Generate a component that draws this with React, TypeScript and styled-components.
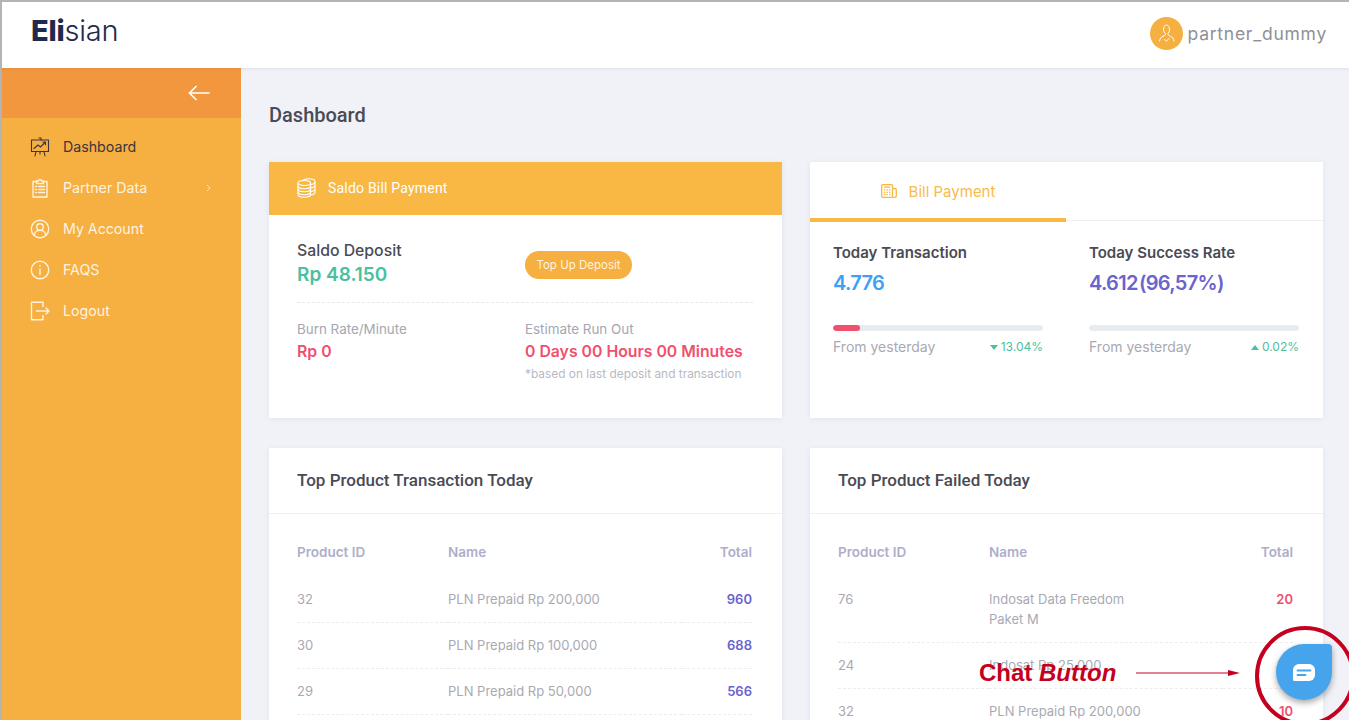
import React from 'react';
import styled, { createGlobalStyle } from 'styled-components';

const Global = createGlobalStyle`
  html, body { margin: 0; padding: 0; height: 100%; overflow: hidden; background: #f0f2f8; }
  * { box-sizing: border-box; }
`;

const Page = styled.div`
  position: relative;
  width: 1349px;
  height: 720px;
  overflow: hidden;
  border-top: 2px solid #b4b4b4;
  border-left: 2px solid #b4b4b4;
  font-family: 'Inter', 'Open Sans', sans-serif;
  background: #f0f2f8;
`;

const Header = styled.header`
  height: 66px;
  background: #fff;
  display: flex;
  align-items: center;
  justify-content: space-between;
  padding: 0 22px 4px 29px;
  box-shadow: 0 1px 3px rgba(60, 60, 90, 0.1);
  position: relative;
`;

const Logo = styled.div`
  font-size: 29px;
  line-height: 1;
  margin-top: -5px;
  color: #1f2a4d;
  font-weight: 300;
  letter-spacing: -0.2px;
  b { font-weight: 800; }
`;

const User = styled.div`
  display: flex;
  align-items: center;
  gap: 5px;
  font-size: 17.5px;
  letter-spacing: 0.75px;
  color: #8f8f97;
`;

const Avatar = styled.div`
  width: 33px;
  height: 33px;
  border-radius: 50%;
  background: #f6af41;
  display: flex;
  align-items: center;
  justify-content: center;
`;

const Body = styled.div`
  display: flex;
  height: 652px;
`;

const Sidebar = styled.aside`
  width: 239px;
  flex: none;
  background: #f6af41;
`;

const SideTop = styled.div`
  height: 50px;
  background: #f2973d;
  display: flex;
  align-items: center;
  justify-content: flex-end;
  padding-right: 31px;
`;

const Menu = styled.nav`
  padding-top: 8px;
`;

const MenuItem = styled.div<{ $active?: boolean }>`
  height: 41px;
  display: flex;
  align-items: center;
  gap: 13px;
  padding: 0 30px 0 28px;
  font-size: 14.2px;
  color: ${p => (p.$active ? '#3a3540' : '#fdf3e0')};
  span { flex: 1; }
`;

const Main = styled.main`
  flex: 1;
  padding: 0 26px 0 28px;
`;

const Title = styled.h1`
  margin: 0;
  height: 94px;
  padding-top: 35px;
  font: 500 20px/24px 'Roboto', sans-serif;
  color: #4a4a55;
`;

const Grid = styled.div`
  display: grid;
  grid-template-columns: 513px 513px;
  grid-template-rows: 256px auto;
  gap: 30px 28px;
`;

const Card = styled.section`
  background: #fff;
  box-shadow: 0 1px 6px rgba(70, 70, 110, 0.08);
  overflow: hidden;
`;

const CardHead = styled.div`
  height: 53px;
  background: #f8b843;
  display: flex;
  align-items: center;
  gap: 12px;
  padding: 0 0 1px 28px;
  font: 400 14px 'Roboto', sans-serif;
  letter-spacing: 0.2px;
  color: #fff;
`;

const SaldoBody = styled.div`
  padding: 0 29px 0 28px;
`;

const SaldoRow = styled.div<{ $dashed?: boolean }>`
  display: grid;
  grid-template-columns: 228px 1fr;
  align-items: ${p => (p.$dashed ? 'center' : 'start')};
  height: ${p => (p.$dashed ? '88px' : 'auto')};
  padding-top: ${p => (p.$dashed ? '12px' : '17px')};
  border-bottom: ${p => (p.$dashed ? '1px dashed #e8e8ee' : 'none')};
`;

const SaldoLabel = styled.div`
  font-size: 15.8px;
  line-height: 20px;
  font-weight: 500;
  color: #4a4a55;
`;

const SaldoValue = styled.div`
  font-size: 19px;
  line-height: 27px;
  font-weight: 600;
  color: #4bc0a0;
`;

const TopUp = styled.button`
  width: 107px;
  height: 28px;
  border: 0;
  padding: 0;
  border-radius: 14px;
  background: #f6af41;
  color: #fff4df;
  font: 400 11.5px 'Inter', sans-serif;
  margin-top: 1px;
`;

const SmallLabel = styled.div`
  font-size: 13.4px;
  line-height: 18px;
  color: #a6a6b0;
`;

const Danger = styled.div`
  font-size: 15.8px;
  line-height: 27px;
  font-weight: 600;
  color: #f0506e;
`;

const Note = styled.div`
  font-size: 11.9px;
  line-height: 17px;
  color: #b9b9c2;
`;

const Tabs = styled.div`
  height: 59px;
  border-bottom: 1px solid #eeeef3;
`;

const Tab = styled.div`
  width: 256px;
  height: 60px;
  border-bottom: 4px solid #f8b843;
  display: flex;
  align-items: center;
  justify-content: center;
  gap: 12px;
  padding-top: 2px;
  font-size: 15px;
  color: #f8bb4a;
`;

const Stats = styled.div`
  display: grid;
  grid-template-columns: 210px 210px;
  gap: 46px;
  padding: 21px 24px 0 23px;
`;

const StatTitle = styled.div`
  font-size: 15px;
  line-height: 22px;
  font-weight: 600;
  color: #4a4a55;
`;

const StatValue = styled.div<{ $color: string }>`
  font-size: 20px;
  line-height: 28px;
  margin-top: 5px;
  font-weight: 600;
  letter-spacing: -0.7px;
  word-spacing: -3px;
  color: ${p => p.$color};
`;

const Track = styled.div`
  height: 6px;
  margin-top: 28px;
  border-radius: 3px;
  background: #e9ecef;
  overflow: hidden;
`;

const Fill = styled.div`
  height: 100%;
  border-radius: 3px;
  background: #f0506e;
`;

const StatFoot = styled.div`
  display: flex;
  justify-content: space-between;
  align-items: center;
  margin-top: 6px;
  font-size: 14px;
  line-height: 20px;
  color: #a9a9b3;
`;

const Delta = styled.span`
  color: #4bc0a0;
  font-size: 12px;
  display: flex;
  align-items: center;
  gap: 3px;
`;

const TableHead = styled.div`
  height: 66px;
  display: flex;
  align-items: center;
  padding: 0 28px 2px;
  border-bottom: 1px solid #eeeef3;
  font: 500 17px 'Roboto', sans-serif;
  color: #4a4a55;
`;

const Table = styled.table`
  width: calc(100% - 58px);
  margin: 28px 30px 0 28px;
  border-collapse: collapse;
  table-layout: fixed;
  font-size: 13px;
  line-height: 20px;
`;

const Th = styled.th<{ $w?: number; $right?: boolean }>`
  width: ${p => (p.$w ? `${p.$w}px` : 'auto')};
  height: 26px;
  padding: 0 0 15px;
  text-align: ${p => (p.$right ? 'right' : 'left')};
  font-size: 13.5px;
  font-weight: 600;
  color: #aeaecb;
`;

const Td = styled.td<{ $right?: boolean; $color?: string }>`
  padding: 12px 0 13px;
  vertical-align: top;
  text-align: ${p => (p.$right ? 'right' : 'left')};
  font-weight: ${p => (p.$color ? 600 : 400)};
  color: ${p => p.$color || '#a9a9b3'};
`;

const Tr = styled.tr`
  border-bottom: 1px dashed #ececf1;
`;

const NameText = styled.div`
  max-width: 172px;
`;

const ChatButton = styled.button`
  position: absolute;
  left: 1274px;
  top: 642px;
  width: 56px;
  height: 56px;
  border: 0;
  padding: 0;
  border-radius: 50% 4px 50% 50%;
  background: #46a4ec;
  box-shadow: 0 3px 6px rgba(0, 0, 0, 0.35);
  display: flex;
  align-items: center;
  justify-content: center;
`;

const Ring = styled.div`
  position: absolute;
  left: 1253px;
  top: 624px;
  width: 100px;
  height: 100px;
  border: 4.5px solid #c4001e;
  border-radius: 50%;
`;

const Callout = styled.div`
  position: absolute;
  left: 977px;
  top: 655px;
  display: flex;
  align-items: center;
  gap: 20px;
  font: 700 24px/32px 'Liberation Sans', sans-serif;
  color: #c4001e;
  i { font-style: italic; }
`;

const stroke = { fill: 'none', stroke: 'currentColor', strokeWidth: 1.4, strokeLinecap: 'round', strokeLinejoin: 'round' } as const;

const DashIcon = () => (
  <svg width="20" height="20" viewBox="0 0 20 20" {...stroke} strokeWidth={1.1}>
    <path d="M1.500 3h17v11.500h-17z" />
    <path d="M9 1h2v2M4 11.500l4-3.500 2.500 2 4.500-4.500M12.800 5H15.500v2.700M6 14.500 5 19M14 14.500l1 4.500M10 14.500V17" />
  </svg>
);
const ClipIcon = () => (
  <svg width="20" height="20" viewBox="0 0 20 20" {...stroke}>
    <path d="M6.500 3.500H3v15.500h14V3.500h-3.500" />
    <path d="M6.500 5.500V3H8.500a1.500 1.500 0 0 1 3 0h2v2.500zM5.500 8.500h1M8.500 8.500h6M5.500 11.500h1M8.500 11.500h6M5.500 14.500h1M8.500 14.500h6" />
  </svg>
);
const AccountIcon = () => (
  <svg width="20" height="20" viewBox="0 0 20 20" {...stroke}>
    <circle cx="10" cy="10" r="8.700" />
    <circle cx="10" cy="8" r="3.300" />
    <path d="M4 16c.8-3 3-4.600 6-4.600s5.200 1.600 6 4.600" />
  </svg>
);
const InfoIcon = () => (
  <svg width="20" height="20" viewBox="0 0 20 20" {...stroke}>
    <circle cx="10" cy="10" r="8.700" />
    <path d="M10 9v5.500M10 5.800v.4" />
  </svg>
);
const LogoutIcon = () => (
  <svg width="20" height="20" viewBox="0 0 20 20" {...stroke}>
    <path d="M13 5.500V1.200H1.500v17.600H13v-4.300M6.500 10h12.500M16 7l3 3-3 3" />
  </svg>
);
const BackArrow = () => (
  <svg width="22" height="16" viewBox="0 0 22 16" fill="none" stroke="#fff" strokeWidth="1.700" strokeLinecap="round">
    <path d="M21 8H1.500M8 1.500 1.500 8 8 14.500" />
  </svg>
);
const PersonIcon = () => (
  <svg width="17" height="19" viewBox="0 0 17 19" fill="none" stroke="#fff" strokeWidth="1" strokeLinecap="round" strokeLinejoin="round">
    <path d="M5.500 5.500C5.500 3 6.700 1 8.500 1s3 2 3 4.500c0 2-1 3.500-1.500 4.200 0 1.300.6 1.800 2.500 2.600 1.800.8 3 1.800 3.500 4.700M1.500 17c.5-2.900 1.700-3.900 3.500-4.700 1.900-.8 2.500-1.300 2.500-2.600-.9-.9-2-2.200-2-4.200" />
    <path d="m6.500 15.500 2 1.700 2.500-2.700" />
  </svg>
);
const CoinsIcon = () => (
  <svg width="19" height="20" viewBox="0 0 19 20" fill="none" stroke="#fff" strokeWidth="1.100">
    <path d="M5.500 3C6 1.600 8.500.7 11.500.7c3.600 0 6.500 1.200 6.500 2.700v11c0 1.200-1.900 2.200-4.500 2.500" />
    <path d="M13.500 6.500c2.500-.3 4.500-1.200 4.500-2.600M13.500 10c2.500-.3 4.500-1.200 4.500-2.600M13.500 13.500c2.500-.3 4.500-1.200 4.500-2.600" />
    <ellipse cx="7.300" cy="5" rx="6.300" ry="2.500" />
    <path d="M1 5v11.500c0 1.500 2.800 2.700 6.300 2.700s6.300-1.200 6.300-2.700V5" />
    <path d="M1 8c0 1.500 2.800 2.700 6.300 2.700S13.600 9.500 13.600 8M1 11c0 1.500 2.800 2.700 6.300 2.700s6.300-1.200 6.300-2.700M1 14c0 1.500 2.800 2.700 6.300 2.700s6.300-1.200 6.300-2.700" />
  </svg>
);
const CalcIcon = () => (
  <svg width="16" height="14" viewBox="0 0 16 14" fill="none" stroke="#f8b843" strokeWidth="1.300">
    <rect x="0.700" y="0.700" width="10.800" height="12.600" rx="1" />
    <path d="M3 3.200h6.200M3 6h1.300M5.500 6h1.300M8 6h1.300M3 8.300h1.300M5.500 8.300h1.300M8 8.300h1.300M3 10.700h1.300M5.500 10.700h1.300M8 10.700h1.300M11.500 4.500h2.200c.9 0 1.600.7 1.600 1.500v6c0 .8-.7 1.300-1.600 1.300h-2.200" />
  </svg>
);
const Chevron = () => (
  <svg width="5" height="8" viewBox="0 0 5 8" fill="none" stroke="#fde9c6" strokeWidth="0.900">
    <path d="m1 1 3 3-3 3" />
  </svg>
);
const Caret = ({ up }: { up?: boolean }) => (
  <svg width="8" height="5" viewBox="0 0 8 5" fill="#4bc0a0">
    <path d={up ? 'M4 0l4 5H0z' : 'M0 0h8L4 5z'} />
  </svg>
);
const ChatGlyph = () => (
  <svg width="22" height="17" viewBox="0 0 22 17">
    <path fill="#fff" d="M6 0h10a6 6 0 0 1 6 6v5a6 6 0 0 1-6 6H1.500A1.500 1.500 0 0 1 0 15.500V6a6 6 0 0 1 6-6z" />
    <path stroke="#46a4ec" strokeWidth="1.800" strokeLinecap="round" d="M4.500 6.500h13M4.500 11h8" />
  </svg>
);

const menu = [
  { label: 'Dashboard', icon: <DashIcon />, active: true },
  { label: 'Partner Data', icon: <ClipIcon />, more: true },
  { label: 'My Account', icon: <AccountIcon /> },
  { label: 'FAQS', icon: <InfoIcon /> },
  { label: 'Logout', icon: <LogoutIcon /> },
];

const topProducts = [
  ['32', 'PLN Prepaid Rp 200,000', '960'],
  ['30', 'PLN Prepaid Rp 100,000', '688'],
  ['29', 'PLN Prepaid Rp 50,000', '566'],
];

const failedProducts = [
  ['76', 'Indosat Data Freedom Paket M', '20'],
  ['24', 'Indosat Rp 25,000', '12'],
  ['32', 'PLN Prepaid Rp 200,000', '10'],
];

const ProductTable = ({ rows, color }: { rows: string[][]; color: string }) => (
  <Table>
    <thead>
      <tr>
        <Th $w={151}>Product ID</Th>
        <Th>Name</Th>
        <Th $w={70} $right>Total</Th>
      </tr>
    </thead>
    <tbody>
      {rows.map(r => (
        <Tr key={r[0]}>
          <Td>{r[0]}</Td>
          <Td><NameText>{r[1]}</NameText></Td>
          <Td $right $color={color}>{r[2]}</Td>
        </Tr>
      ))}
    </tbody>
  </Table>
);

export default function App() {
  return (
    <Page>
      <Global />
      <Header>
        <Logo><b>Eli</b>sian</Logo>
        <User>
          <Avatar><PersonIcon /></Avatar>
          partner_dummy
        </User>
      </Header>
      <Body>
        <Sidebar>
          <SideTop><BackArrow /></SideTop>
          <Menu>
            {menu.map(m => (
              <MenuItem key={m.label} $active={m.active}>
                {m.icon}
                <span>{m.label}</span>
                {m.more && <Chevron />}
              </MenuItem>
            ))}
          </Menu>
        </Sidebar>
        <Main>
          <Title>Dashboard</Title>
          <Grid>
            <Card>
              <CardHead><CoinsIcon />Saldo Bill Payment</CardHead>
              <SaldoBody>
                <SaldoRow $dashed>
                  <div>
                    <SaldoLabel>Saldo Deposit</SaldoLabel>
                    <SaldoValue>Rp 48.150</SaldoValue>
                  </div>
                  <div><TopUp>Top Up Deposit</TopUp></div>
                </SaldoRow>
                <SaldoRow>
                  <div>
                    <SmallLabel>Burn Rate/Minute</SmallLabel>
                    <Danger>Rp 0</Danger>
                  </div>
                  <div>
                    <SmallLabel>Estimate Run Out</SmallLabel>
                    <Danger>0 Days 00 Hours 00 Minutes</Danger>
                    <Note>*based on last deposit and transaction</Note>
                  </div>
                </SaldoRow>
              </SaldoBody>
            </Card>
            <Card>
              <Tabs><Tab><CalcIcon />Bill Payment</Tab></Tabs>
              <Stats>
                <div>
                  <StatTitle>Today Transaction</StatTitle>
                  <StatValue $color="#3da0f5">4.776</StatValue>
                  <Track><Fill style={{ width: '13%' }} /></Track>
                  <StatFoot>From yesterday<Delta><Caret />13.04%</Delta></StatFoot>
                </div>
                <div>
                  <StatTitle>Today Success Rate</StatTitle>
                  <StatValue $color="#6a64cc">4.612 (96,57%)</StatValue>
                  <Track />
                  <StatFoot>From yesterday<Delta><Caret up />0.02%</Delta></StatFoot>
                </div>
              </Stats>
            </Card>
            <Card>
              <TableHead>Top Product Transaction Today</TableHead>
              <ProductTable rows={topProducts} color="#6a64cc" />
            </Card>
            <Card>
              <TableHead>Top Product Failed Today</TableHead>
              <ProductTable rows={failedProducts} color="#f0506e" />
            </Card>
          </Grid>
        </Main>
      </Body>
      <Callout>
        <span>Chat <i>Button</i></span>
        <svg width="104" height="8" viewBox="0 0 104 8">
          <path d="M0 4h92" stroke="#c4001e" strokeWidth="1" />
          <path d="M92 1l12 3-12 3z" fill="#c4001e" />
        </svg>
      </Callout>
      <ChatButton aria-label="Chat"><ChatGlyph /></ChatButton>
      <Ring />
    </Page>
  );
}
